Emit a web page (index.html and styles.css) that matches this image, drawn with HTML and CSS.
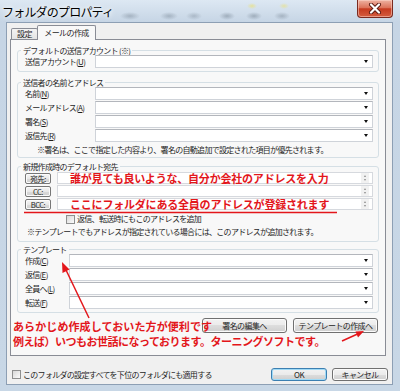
FILE: index.html
```html
<!DOCTYPE html>
<html lang="ja">
<head>
    <meta charset="UTF-8">
    <meta name="viewport" content="width=device-width, initial-scale=1.0">
    <title>フォルダのプロパティ</title>
    <link rel="stylesheet" href="styles.css">
</head>
<body>
    <div class="window">
        <div class="titlebar">
            <span class="title">フォルダのプロパティ</span>
            <button class="close-btn" aria-label="閉じる">
                <svg width="14" height="11" viewBox="0 0 14 11">
                    <path d="M3 1.5 L11 9.5 M11 1.5 L3 9.5" stroke="#5a1a12" stroke-width="4" stroke-linecap="round"/>
                    <path d="M3 1.5 L11 9.5 M11 1.5 L3 9.5" stroke="#fff" stroke-width="2.2" stroke-linecap="round"/>
                </svg>
            </button>
        </div>

        <div class="client">
            <div class="tabs">
                <div class="tab">設定</div>
                <div class="tab active">メールの作成</div>
            </div>

            <div class="panel">
                <!-- 送信アカウント -->
                <div class="group g-account">
                    <div class="group-title">デフォルトの送信アカウント (※)</div>
                    <div class="row">
                        <span class="label">送信アカウント(<u>U</u>)</span>
                        <div class="combo"></div>
                    </div>
                </div>

                <!-- 送信者 -->
                <div class="group g-sender">
                    <div class="group-title">送信者の名前とアドレス</div>
                    <div class="row"><span class="label">名前(<u>N</u>)</span><div class="combo"></div></div>
                    <div class="row"><span class="label">メールアドレス(<u>A</u>)</span><div class="combo"></div></div>
                    <div class="row"><span class="label">署名(<u>S</u>)</span><div class="combo"></div></div>
                    <div class="row"><span class="label">返信先(<u>R</u>)</span><div class="combo"></div></div>
                    <div class="note note-sender">※署名は、ここで指定した内容より、署名の自動追加で設定された項目が優先されます。</div>
                </div>

                <!-- 宛先 -->
                <div class="group g-dest">
                    <div class="group-title">新規作成時のデフォルト宛先</div>
                    <div class="row"><span class="addr-btn">宛先:</span><div class="field"><span class="spin"></span></div></div>
                    <div class="row"><span class="addr-btn">CC:</span><div class="field"><span class="spin"></span></div></div>
                    <div class="row"><span class="addr-btn">BCC:</span><div class="field"><span class="spin"></span></div></div>
                    <div class="check-row dest-check"><span class="checkbox"></span>返信、転送時にもこのアドレスを追加</div>
                    <div class="note note-dest">※テンプレートでもアドレスが指定されている場合には、このアドレスが追加されます。</div>
                </div>

                <!-- テンプレート -->
                <div class="group g-template">
                    <div class="group-title">テンプレート</div>
                    <div class="row"><span class="label">作成(<u>C</u>)</span><div class="combo"></div></div>
                    <div class="row"><span class="label">返信(<u>E</u>)</span><div class="combo"></div></div>
                    <div class="row"><span class="label">全員へ(<u>L</u>)</span><div class="combo"></div></div>
                    <div class="row"><span class="label">転送(<u>F</u>)</span><div class="combo"></div></div>
                </div>

                <div class="actions">
                    <button class="btn btn-wide">署名の編集へ</button>
                    <button class="btn btn-wide">テンプレートの作成へ</button>
                </div>
            </div>

            <div class="footer">
                <div class="check-row"><span class="checkbox"></span>このフォルダの設定すべてを下位のフォルダにも適用する</div>
                <button class="btn btn-default">OK</button>
                <button class="btn">キャンセル</button>
            </div>
        </div>

        <!-- 赤字の注釈 -->
        <div class="annotations">
            <span class="memo memo-to">誰が見ても良いような、自分か会社のアドレスを入力</span>
            <span class="memo memo-bcc">ここにフォルダにある全員のアドレスが登録されます</span>
            <span class="memo memo-line1">あらかじめ作成しておいた方が便利です</span>
            <span class="memo memo-line2">例えば）いつもお世話になっております。ターニングソフトです。</span>
            <svg class="arrows" width="400" height="391" viewBox="0 0 400 391">
                <line x1="24" y1="212.5" x2="337" y2="212.5" stroke="#e3161b" stroke-width="1.5"/>
                <line x1="89" y1="318" x2="66" y2="270" stroke="#e3161b" stroke-width="1.5"/>
                <polygon points="62,262 69.5,269.5 62.5,273" fill="#e3161b"/>
                <line x1="342" y1="341" x2="357" y2="334.3" stroke="#e3161b" stroke-width="1.5"/>
                <polygon points="364,331 358,337.5 355.5,331.5" fill="#e3161b"/>
            </svg>
        </div>
    </div>
</body>
</html>
```

FILE: styles.css
```css
body {
    margin: 0;
    background: #fff;
    font-family: "Noto Sans CJK JP", "Noto Sans", sans-serif;
    color: #1e1e1e;
}
.window {
    position: relative;
    width: 400px;
    height: 391px;
    box-sizing: border-box;
    padding: 0 7px 6px 6px;
    display: flex;
    flex-direction: column;
    overflow: hidden;
    background:
        radial-gradient(ellipse 10px 4px at 130px 16px, rgba(90, 105, 120, 0.35), transparent),
        radial-gradient(ellipse 9px 4px at 169px 16px, rgba(90, 105, 120, 0.35), transparent),
        radial-gradient(ellipse 8px 4px at 194px 16px, rgba(90, 105, 120, 0.3), transparent),
        radial-gradient(ellipse 8px 4px at 227px 16px, rgba(90, 105, 120, 0.4), transparent),
        radial-gradient(ellipse 8px 4px at 254px 16px, rgba(90, 105, 120, 0.4), transparent),
        radial-gradient(ellipse 8px 4px at 282px 16px, rgba(90, 105, 120, 0.35), transparent),
        radial-gradient(ellipse 5px 3px at 252px 6px, rgba(235, 225, 120, 0.7), transparent),
        radial-gradient(ellipse 5px 3px at 284px 6px, rgba(235, 225, 120, 0.6), transparent),
        linear-gradient(#dde8f3, #c6d5e5 22px, #c8d7e6);
}
.titlebar {
    height: 22px;
    margin: 0 -7px 0 -6px;
    padding-left: 2px;
    display: flex;
    align-items: flex-start;
}
.title {
    font-size: 12px;
    letter-spacing: -0.8px;
    line-height: 23px;
    color: #000;
    text-shadow: 0 0 4px #fff, 0 0 7px #fff;
}
.close-btn {
    margin-left: auto;
    margin-right: 7px;
    width: 36px;
    height: 18px;
    padding: 0;
    border: 1px solid #7a2a20;
    border-top: none;
    border-radius: 0 0 4px 4px;
    background: linear-gradient(#eeb2a2, #dc735b 45%, #c63a20 52%, #d45d40);
    box-shadow: inset 0 0 0 1px rgba(255, 220, 210, 0.5);
    display: flex;
    align-items: center;
    justify-content: center;
}
.client {
    flex: 1;
    box-sizing: border-box;
    background: #f0f0f0;
    border: 1px solid #8d9fb4;
    padding: 2px 6px 0 3px;
}

/* タブ */
.tabs {
    display: flex;
    align-items: flex-end;
    height: 14px;
}
.tab {
    box-sizing: border-box;
    width: 27px;
    height: 11px;
    margin-left: 1px;
    border: 1px solid #898c95;
    border-bottom: none;
    border-radius: 2px 2px 0 0;
    background: linear-gradient(#f3f3f3, #e4e4e4);
    font-size: 8px;
    letter-spacing: -0.6px;
    line-height: 10px;
    text-align: center;
}
.tab.active {
    position: relative;
    z-index: 1;
    width: 59px;
    height: 15px;
    margin-left: -1px;
    margin-bottom: -1px;
    background: #f8f8f8;
    line-height: 14px;
}
.panel {
    box-sizing: border-box;
    height: 317px;
    border: 1px solid #898c95;
    background: #f8f8f8;
    padding: 0 6px;
}

/* グループボックス */
.group {
    border: 1px solid #d5dfe5;
    border-radius: 3px;
    padding: 1px 5px 3px 7px;
}
.group-title {
    width: max-content;
    margin: -6px 0 -1px -4px;
    padding: 0 2px;
    background: #f8f8f8;
    font-size: 8px;
    letter-spacing: -0.7px;
    line-height: 10px;
}
.g-account {
    margin-top: 10px;
}
.g-sender {
    margin-top: 10px;
    padding-bottom: 2px;
}
.g-dest {
    margin-top: 8px;
    padding-bottom: 4px;
}
.g-template {
    margin-top: 7px;
}
.row {
    display: flex;
    align-items: center;
    height: 13px;
}
.row + .row {
    margin-top: 1px;
}
.label {
    width: 70px;
    flex-shrink: 0;
    font-size: 8px;
    letter-spacing: -0.7px;
    line-height: 10px;
}
.g-template .label {
    width: 44px;
}
.combo {
    flex: 1;
    box-sizing: border-box;
    height: 13px;
    background: #fff;
    border: 1px solid #cfd3d9;
    border-top-color: #b3b6bc;
    display: flex;
    justify-content: flex-end;
    align-items: center;
    padding-right: 4px;
}
.combo::after {
    content: "";
    border-left: 2.5px solid transparent;
    border-right: 2.5px solid transparent;
    border-top: 3px solid #111;
}

/* 宛先 */
.g-dest .row {
    height: 12px;
}
.g-dest .group-title + .row {
    margin-top: 1px;
}
.addr-btn {
    box-sizing: border-box;
    width: 26px;
    height: 11px;
    margin-right: 6px;
    flex-shrink: 0;
    border: 1px solid #777;
    border-radius: 2px;
    background: linear-gradient(#f6f6f6, #e8e8e8 50%, #dadada 50%, #d0d0d0);
    box-shadow: inset 0 0 0 1px #fbfbfb;
    font-size: 7.5px;
    letter-spacing: -0.5px;
    line-height: 9px;
    text-align: center;
}
.field {
    flex: 1;
    box-sizing: border-box;
    height: 12px;
    background: #fff;
    border: 1px solid #d6d9de;
    display: flex;
    justify-content: flex-end;
    align-items: center;
    padding-right: 3px;
}
.spin {
    width: 8px;
    height: 10px;
    background: #f1f1f1;
    display: flex;
    flex-direction: column;
    align-items: center;
    justify-content: center;
    gap: 2px;
}
.spin::before,
.spin::after {
    content: "";
    border-left: 1.5px solid transparent;
    border-right: 1.5px solid transparent;
}
.spin::before {
    border-bottom: 2px solid #8a8a8a;
}
.spin::after {
    border-top: 2px solid #8a8a8a;
}
.check-row {
    display: flex;
    align-items: center;
    gap: 2px;
    font-size: 8px;
    letter-spacing: -0.7px;
    line-height: 10px;
}
.checkbox {
    width: 7px;
    height: 7px;
    flex-shrink: 0;
    border: 1px solid #8e8f8f;
    background: linear-gradient(135deg, #d8d8d8, #fbfbfb);
}
.dest-check {
    margin: 4px 0 0 41px;
}
.note {
    font-size: 8px;
    letter-spacing: -0.7px;
    line-height: 10px;
    white-space: nowrap;
}
.note-sender {
    margin-top: 3px;
    padding-left: 12px;
}
.note-dest {
    margin-top: 3px;
    padding-left: 2px;
}

/* ボタン */
.actions {
    display: flex;
    justify-content: flex-end;
    gap: 6px;
    margin-top: 5px;
    padding-right: 1px;
}
.btn {
    box-sizing: border-box;
    height: 13px;
    width: 56px;
    padding: 0;
    border: 1px solid #707070;
    border-radius: 3px;
    background: linear-gradient(#f2f2f2, #ebebeb 50%, #dddddd 50%, #cfcfcf);
    box-shadow: inset 0 0 0 1px #fbfbfb;
    font-family: inherit;
    font-size: 8px;
    letter-spacing: -0.6px;
    line-height: 11px;
    color: #1e1e1e;
}
.btn-wide {
    width: 85px;
    height: 15px;
    line-height: 13px;
}
.btn-default {
    border-color: #3c7fb1;
    box-shadow: inset 0 0 0 1px #9fdaf6;
}
.footer {
    display: flex;
    align-items: center;
    gap: 5px;
    margin: 12px -2px 0 2px;
}
.footer .check-row {
    margin-right: auto;
}

/* 注釈 */
.annotations {
    position: absolute;
    inset: 0;
    pointer-events: none;
}
.memo {
    position: absolute;
    font-size: 11px;
    font-weight: bold;
    letter-spacing: -0.2px;
    line-height: 14px;
    color: #e3161b;
    white-space: nowrap;
}
.memo-to {
    left: 70px;
    top: 171px;
}
.memo-bcc {
    left: 70px;
    top: 197px;
}
.memo-line1 {
    left: 13px;
    top: 319px;
    letter-spacing: 0.1px;
}
.memo-line2 {
    left: 13px;
    top: 334px;
    letter-spacing: -0.5px;
}
.arrows {
    position: absolute;
    left: 0;
    top: 0;
}
```
